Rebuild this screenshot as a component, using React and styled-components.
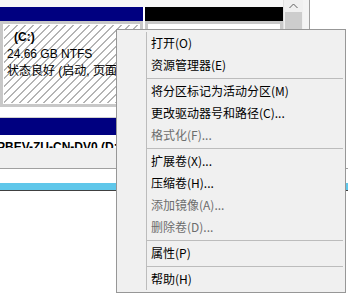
import React from 'react';
import styled, { createGlobalStyle } from 'styled-components';

const Global = createGlobalStyle`
  html, body { margin: 0; padding: 0; background: #fff; }
  body { font-family: "Noto Sans CJK SC", "Noto Sans", sans-serif; }
`;

const Screen = styled.div`
  position: relative;
  width: 348px;
  height: 297px;
  overflow: hidden;
  background: #fff;
  display: flex;
  flex-direction: column;
`;

const UpperPane = styled.div`
  display: flex;
  height: 168px;
  border-bottom: 1px solid #a0a0a0;
`;

const DiskMap = styled.div`
  width: 283px;
  display: flex;
  flex-direction: column;
  overflow: hidden;
`;

const TopStrip = styled.div`
  height: 7px;
  background: #f7f7f7;
`;

const PartitionRow = styled.div`
  display: flex;
  gap: 2px;
  height: 100px;
`;

const Partition = styled.div`
  display: flex;
  flex-direction: column;
  width: ${p => p.$w}px;
  flex: none;
`;

const PartitionHeader = styled.div`
  height: ${p => p.$h || 14}px;
  background: ${p => p.$color};
  flex: none;
`;

const PartitionBody = styled.div`
  flex: 1;
  border: 3px solid #c8c8c8;
  box-shadow: inset 0 0 0 1px #fff;
  background: ${p => p.$hatched
    ? 'repeating-linear-gradient(135deg, #fff 0px, #fff 4.6px, #b4b4b4 4.6px, #b4b4b4 5.66px)'
    : '#fff'};
  padding: 5px 0 0 4px;
  font-family: "Liberation Sans", "Noto Sans CJK SC", sans-serif;
  font-size: 12px;
  line-height: 17px;
  color: #000;
  white-space: nowrap;
  overflow: hidden;
`;

const VolName = styled.div`
  font-weight: bold;
  padding-left: 7px;
`;

const DiskGap = styled.div`
  height: 10px;
  border-bottom: 1px solid #d0d0d0;
  flex: none;
`;

const SecondRow = styled.div`
  display: flex;
  flex-direction: column;
  flex: 1;
`;

const ClipLabel = styled.div`
  height: 13px;
  flex: none;
  overflow: hidden;
  font-family: "Liberation Sans", "Noto Sans CJK SC", sans-serif;
  font-size: 12px;
  line-height: 14px;
  padding-top: 5px;
  box-sizing: border-box;
  font-weight: bold;
  white-space: nowrap;
  text-indent: -3px;
`;

const HScroll = styled.div`
  flex: 1;
  background: #f0f0f0;
`;

const VScroll = styled.div`
  width: 19px;
  background: #f0f0f0;
  border-left: 1px solid #e0e0e0;
  display: flex;
  flex-direction: column;
`;

const ScrollArrow = styled.div`
  height: 12px;
  display: flex;
  align-items: center;
  justify-content: center;
`;

const ScrollThumb = styled.div`
  height: 60px;
  margin: 0 1px;
  background: #cdcdcd;
`;

const Frame = styled.div`
  width: 6px;
  background: #f4f4f4;
  border-right: 1px solid #a0a0a0;
`;

const LowerPane = styled.div`
  display: flex;
  flex-direction: column;
  flex: 1;
`;

const LowerWhite = styled.div`
  height: 14px;
`;

const CyanBar = styled.div`
  height: 7px;
  background: #5fc7ea;
  border-bottom: 1px solid #404040;
`;

const Menu = styled.div`
  position: absolute;
  left: 116px;
  top: 29px;
  width: 224px;
  padding: 2px;
  background: #f0f0f0;
  border: 1px solid #979797;
  font-family: "Noto Sans CJK SC", "Noto Sans", sans-serif;
  font-size: 12px;
  &::before {
    content: '';
    position: absolute;
    left: 29px;
    top: 2px;
    bottom: 2px;
    width: 1px;
    background: #bcbcbc;
  }
`;

const MenuItem = styled.div`
  height: 22px;
  line-height: 22px;
  padding-left: 32px;
  color: ${p => (p.$disabled ? '#6d6d6d' : '#000')};
  white-space: nowrap;
`;

const MenuSep = styled.div`
  height: 4px;
  display: flex;
  align-items: center;
  padding-left: 28px;
  &::after {
    content: '';
    flex: 1;
    height: 1px;
    background: #bcbcbc;
  }
`;

const items = [
  { t: '打开(O)' },
  { t: '资源管理器(E)' },
  { sep: true },
  { t: '将分区标记为活动分区(M)' },
  { t: '更改驱动器号和路径(C)...' },
  { t: '格式化(F)...', d: true },
  { sep: true },
  { t: '扩展卷(X)...' },
  { t: '压缩卷(H)...' },
  { t: '添加镜像(A)...', d: true },
  { t: '删除卷(D)...', d: true },
  { sep: true },
  { t: '属性(P)' },
  { sep: true },
  { t: '帮助(H)' },
];

export default function App() {
  return (
    <Screen>
      <Global />
      <UpperPane>
        <DiskMap>
          <TopStrip />
          <PartitionRow>
            <Partition $w={143}>
              <PartitionHeader $color="#000080" />
              <PartitionBody $hatched>
                <VolName>(C:)</VolName>
                <div>24.66 GB NTFS</div>
                <div>状态良好 (启动, 页面文件, 故障转储, 主分区)</div>
              </PartitionBody>
            </Partition>
            <Partition $w={138}>
              <PartitionHeader $color="#000" />
              <PartitionBody />
            </Partition>
          </PartitionRow>
          <DiskGap />
          <SecondRow>
            <PartitionHeader $color="#000080" $h={17} />
            <ClipLabel>PBEV-ZU-CN-DV0 (D:)</ClipLabel>
            <HScroll />
          </SecondRow>
        </DiskMap>
        <VScroll>
          <ScrollArrow>
            <svg width="9" height="6" viewBox="0 0 9 6">
              <path d="M0.5 5 L4.5 1 L8.5 5" fill="none" stroke="#606060" strokeWidth="1" />
            </svg>
          </ScrollArrow>
          <ScrollThumb />
        </VScroll>
        <Frame />
      </UpperPane>
      <LowerPane>
        <LowerWhite />
        <CyanBar />
      </LowerPane>
      <Menu>
        {items.map((it, i) =>
          it.sep ? <MenuSep key={i} /> : <MenuItem key={i} $disabled={it.d}>{it.t}</MenuItem>
        )}
      </Menu>
    </Screen>
  );
}
